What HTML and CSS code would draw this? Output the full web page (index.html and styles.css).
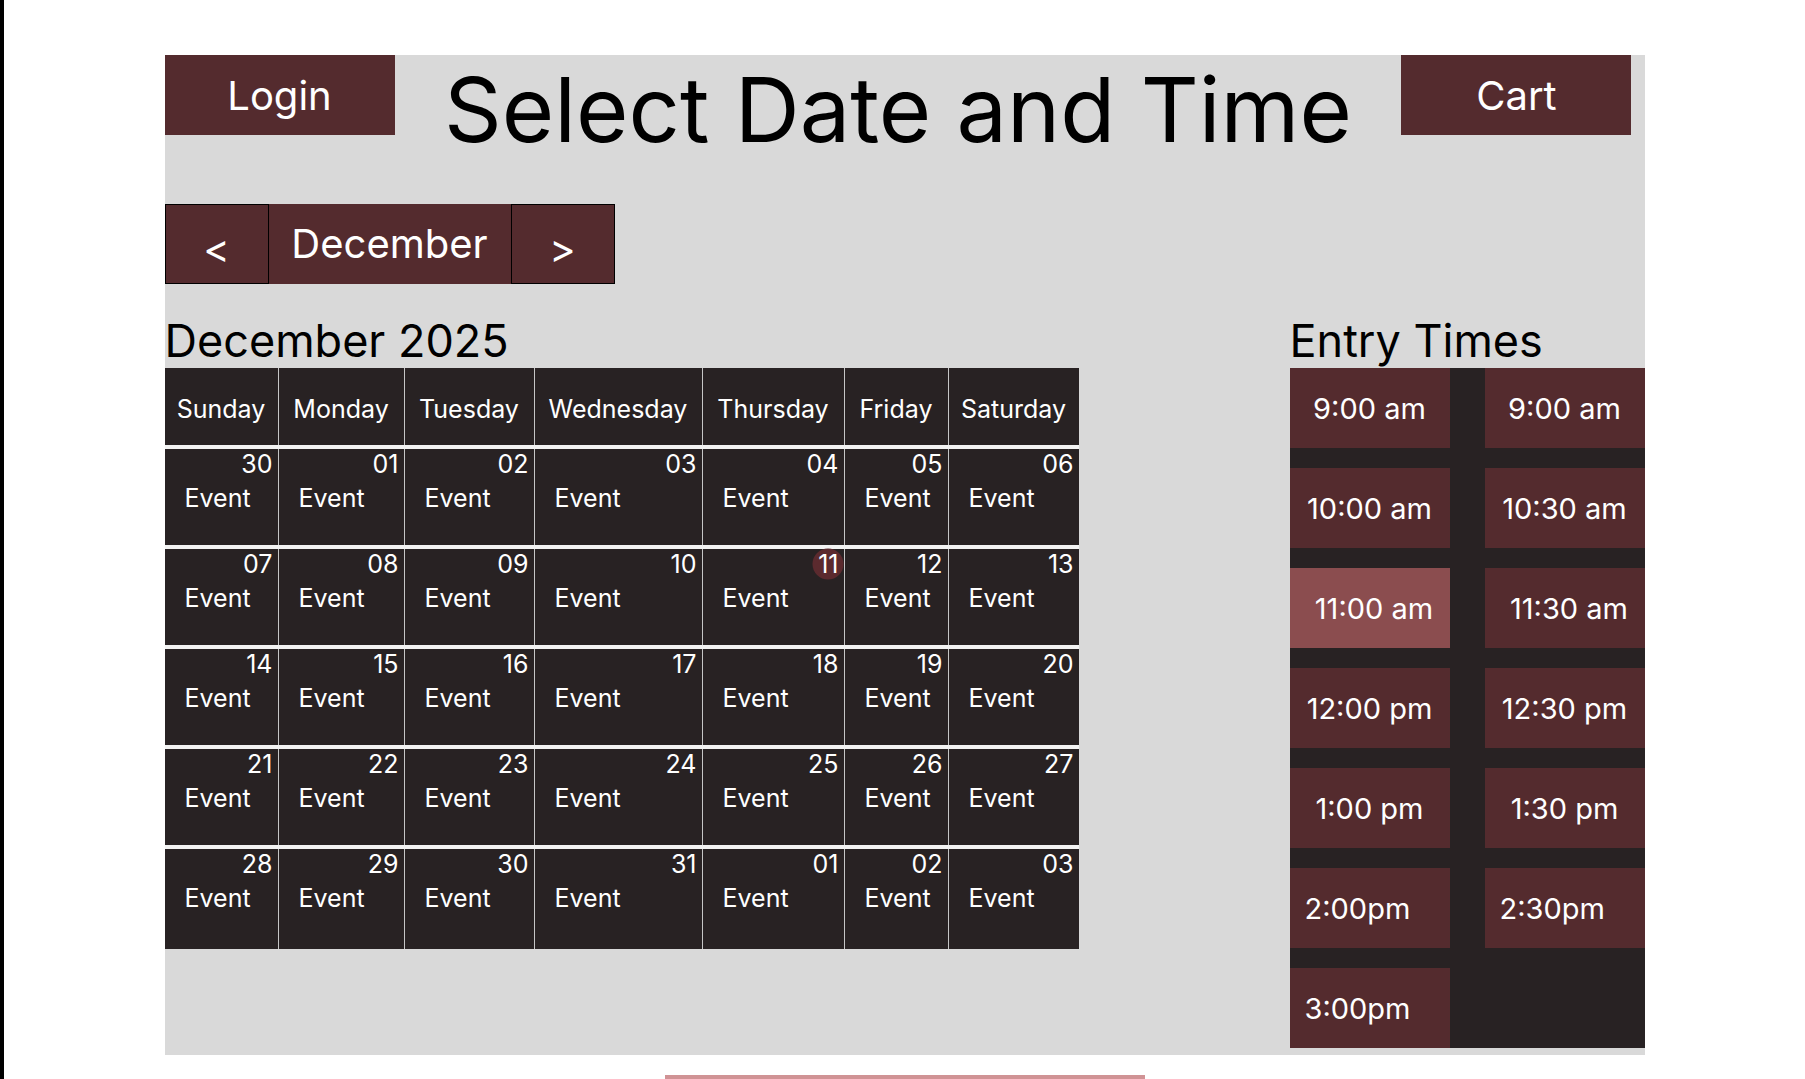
FILE: index.html
```html
<!DOCTYPE html>
<html lang="en">
<head>
    <meta charset="UTF-8">
    <meta name="viewport" content="width=device-width, initial-scale=1.0">
    <title>Select Date and Time</title>
    <link rel="stylesheet" href="styles.css">
</head>
<body>
    <div class="page">
        <!-- Top bar -->
        <div class="header">
            <button class="top-btn">Login</button>
            <h1 class="title">Select Date and Time</h1>
            <button class="top-btn">Cart</button>
        </div>

        <!-- Month switcher -->
        <div class="month-nav">
            <button class="arrow">&lt;</button>
            <div class="month">December</div>
            <button class="arrow">&gt;</button>
        </div>

        <div class="main">
            <!-- Calendar -->
            <section class="cal-wrap">
                <h2 class="section-title">December 2025</h2>
                <div class="calendar">
                    <div class="week head">
                        <div class="day-name">Sunday</div>
                        <div class="day-name">Monday</div>
                        <div class="day-name">Tuesday</div>
                        <div class="day-name">Wednesday</div>
                        <div class="day-name">Thursday</div>
                        <div class="day-name">Friday</div>
                        <div class="day-name">Saturday</div>
                    </div>
                    <div class="week">
                        <div class="day"><div class="num">30</div><div class="ev">Event</div></div>
                        <div class="day"><div class="num">01</div><div class="ev">Event</div></div>
                        <div class="day"><div class="num">02</div><div class="ev">Event</div></div>
                        <div class="day"><div class="num">03</div><div class="ev">Event</div></div>
                        <div class="day thu"><div class="num">04</div><div class="ev">Event</div></div>
                        <div class="day"><div class="num">05</div><div class="ev">Event</div></div>
                        <div class="day"><div class="num">06</div><div class="ev">Event</div></div>
                    </div>
                    <div class="week">
                        <div class="day"><div class="num">07</div><div class="ev">Event</div></div>
                        <div class="day"><div class="num">08</div><div class="ev">Event</div></div>
                        <div class="day"><div class="num">09</div><div class="ev">Event</div></div>
                        <div class="day"><div class="num">10</div><div class="ev">Event</div></div>
                        <div class="day thu"><div class="num"><span class="today">11</span></div><div class="ev">Event</div></div>
                        <div class="day"><div class="num">12</div><div class="ev">Event</div></div>
                        <div class="day"><div class="num">13</div><div class="ev">Event</div></div>
                    </div>
                    <div class="week">
                        <div class="day"><div class="num">14</div><div class="ev">Event</div></div>
                        <div class="day"><div class="num">15</div><div class="ev">Event</div></div>
                        <div class="day"><div class="num">16</div><div class="ev">Event</div></div>
                        <div class="day"><div class="num">17</div><div class="ev">Event</div></div>
                        <div class="day thu"><div class="num">18</div><div class="ev">Event</div></div>
                        <div class="day"><div class="num">19</div><div class="ev">Event</div></div>
                        <div class="day"><div class="num">20</div><div class="ev">Event</div></div>
                    </div>
                    <div class="week">
                        <div class="day"><div class="num">21</div><div class="ev">Event</div></div>
                        <div class="day"><div class="num">22</div><div class="ev">Event</div></div>
                        <div class="day"><div class="num">23</div><div class="ev">Event</div></div>
                        <div class="day"><div class="num">24</div><div class="ev">Event</div></div>
                        <div class="day thu"><div class="num">25</div><div class="ev">Event</div></div>
                        <div class="day"><div class="num">26</div><div class="ev">Event</div></div>
                        <div class="day"><div class="num">27</div><div class="ev">Event</div></div>
                    </div>
                    <div class="week last">
                        <div class="day"><div class="num">28</div><div class="ev">Event</div></div>
                        <div class="day"><div class="num">29</div><div class="ev">Event</div></div>
                        <div class="day"><div class="num">30</div><div class="ev">Event</div></div>
                        <div class="day"><div class="num">31</div><div class="ev">Event</div></div>
                        <div class="day thu"><div class="num">01</div><div class="ev">Event</div></div>
                        <div class="day"><div class="num">02</div><div class="ev">Event</div></div>
                        <div class="day"><div class="num">03</div><div class="ev">Event</div></div>
                    </div>
                </div>
            </section>

            <!-- Time slots -->
            <section class="times-wrap">
                <h2 class="section-title">Entry Times</h2>
                <div class="times">
                    <button class="slot">9:00 am</button>
                    <button class="slot">9:00 am</button>
                    <button class="slot">10:00 am</button>
                    <button class="slot">10:30 am</button>
                    <button class="slot selected shift">11:00 am</button>
                    <button class="slot shift">11:30 am</button>
                    <button class="slot">12:00 pm</button>
                    <button class="slot">12:30 pm</button>
                    <button class="slot">1:00 pm</button>
                    <button class="slot">1:30 pm</button>
                    <button class="slot left">2:00pm</button>
                    <button class="slot left">2:30pm</button>
                    <button class="slot left">3:00pm</button>
                </div>
            </section>
        </div>
    </div>

    <!-- Bottom bar, mostly below the fold -->
    <div class="continue"></div>
</body>
</html>
```

FILE: styles.css
```css
/* Base */
html, body {
    margin: 0;
    padding: 0;
    background: #fff;
}

body {
    border-left: 4px solid #000;
    min-height: 100vh;
    box-sizing: border-box;
    font-family: 'Inter', 'Noto Sans', sans-serif;
    color: #000;
}

button {
    font-family: inherit;
    border: none;
    cursor: pointer;
    padding: 0;
}

/* Gray panel */
.page {
    width: 1480px;
    height: 1000px;
    margin: 55px auto 0;
    background: #d9d9d9;
}

/* Header */
.header {
    display: flex;
    justify-content: space-between;
    align-items: flex-start;
    padding-right: 13px;
}

.top-btn {
    width: 230px;
    height: 80px;
    background: #542b2e;
    color: #fff;
    font-size: 40px;
}

.title {
    margin: 0;
    font-size: 90px;
    font-weight: 400;
    line-height: 110px;
}

/* Month switcher */
.month-nav {
    display: flex;
    margin-top: 39px;
    height: 80px;
}

.arrow {
    width: 104px;
    height: 80px;
    box-sizing: border-box;
    border: 1px solid #000;
    background: #542b2e;
    color: #fff;
    font-size: 40px;
    padding-top: 8px;
}

.month {
    width: 242px;
    display: flex;
    align-items: center;
    justify-content: center;
    background: #542b2e;
    color: #fff;
    font-size: 40px;
    padding-bottom: 2px;
    box-sizing: border-box;
}

/* Main area */
.main {
    display: flex;
    justify-content: space-between;
    margin-top: 30px;
}

.section-title {
    margin: 0;
    font-size: 45px;
    font-weight: 400;
    line-height: 54px;
}

/* Calendar */
.calendar {
    display: flex;
    flex-direction: column;
    gap: 4px;
    width: 914px;
    background: #f3f3f3;
}

.week {
    display: grid;
    grid-template-columns: 113px 125px 129px 167px 141px 103px 130px;
    column-gap: 1px;
    height: 96px;
    background: #c6c6c6;
}

.week.head {
    height: 77px;
}

.week.last {
    height: 100px;
}

.day-name,
.day {
    background: #282223;
    color: #fff;
    font-size: 25px;
}

.day-name {
    display: flex;
    align-items: center;
    justify-content: center;
    padding-top: 4px;
}

.day {
    padding: 1px 5px 0 20px;
}

.num {
    text-align: right;
    line-height: 29px;
    margin-bottom: 5px;
}

.ev {
    line-height: 29px;
}

.thu .ev {
    margin-top: 2px;
}

.today {
    position: relative;
    z-index: 0;
}

.today::before {
    content: '';
    position: absolute;
    left: 50%;
    top: 50%;
    width: 31px;
    height: 31px;
    border-radius: 50%;
    background: #5b2a2e;
    transform: translate(-50%, -50%);
    z-index: -1;
}

/* Time slots */
.times {
    display: grid;
    grid-template-columns: 160px 160px;
    grid-auto-rows: 80px;
    column-gap: 35px;
    row-gap: 20px;
    width: 355px;
    background: #282223;
}

.slot {
    background: #542b2e;
    color: #fff;
    font-size: 29px;
    text-align: center;
}

.slot.selected {
    background: #8b4d4f;
}

.slot.shift {
    padding-left: 9px;
}

.slot.left {
    text-align: left;
    padding-left: 15px;
}

.continue {
    width: 480px;
    height: 70px;
    margin: 20px auto 0;
    background: #d09395;
}
```
